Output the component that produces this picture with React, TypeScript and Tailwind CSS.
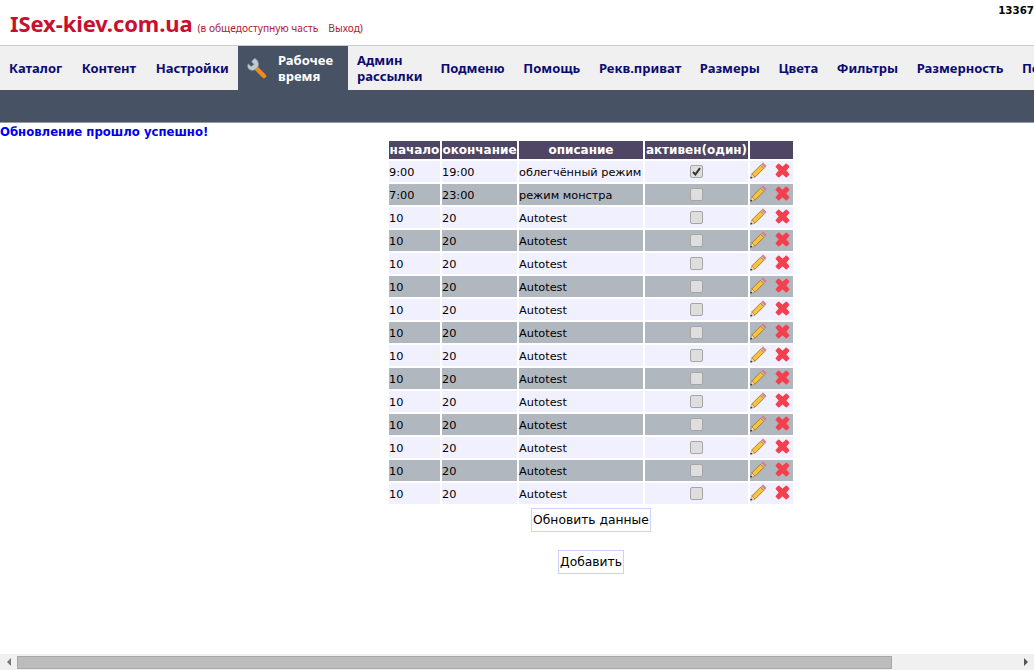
import { useState } from "react";

interface Row {
  start: string;
  end: string;
  title: string;
  active?: boolean;
}

const menu = ["Каталог", "Контент", "Настройки"];
const menuRest = ["Подменю", "Помощь", "Рекв.приват", "Размеры", "Цвета", "Фильтры", "Размерность", "Пользователи"];

const rows: Row[] = [
  { start: "9:00", end: "19:00", title: "облегчённый режим", active: true },
  { start: "7:00", end: "23:00", title: "режим монстра" },
  ...Array.from({ length: 13 }, () => ({ start: "10", end: "20", title: "Autotest" })),
];

function WrenchIcon() {
  return (
    <svg width="22" height="22" viewBox="0 0 22 22">
      <path d="M10 11 L18 19" stroke="#f08c1e" strokeWidth="4.5" strokeLinecap="round" />
      <path
        d="M8.5 1.5 L5.5 4.5 L8 7.5 L5 9.5 L2.2 6.8 C1 9.5 2 12.5 5 13.2 C7 13.7 8.6 13 9.6 12 L11.8 10 C12.8 8.5 12.8 6 11.6 4 C11 2.8 9.8 1.8 8.5 1.5 Z"
        fill="#c3c9d1"
        stroke="#8d96a3"
        strokeWidth="0.6"
      />
    </svg>
  );
}

function PencilIcon() {
  return (
    <svg width="17" height="17" viewBox="0 0 17 17" className="shrink-0">
      <path d="M13 0.8 L16.2 4 L14.8 5.4 L11.6 2.2 Z" fill="#ef7f8a" stroke="#c9606a" strokeWidth="0.5" />
      <path d="M11.6 2.2 L14.8 5.4 L13.8 6.4 L10.6 3.2 Z" fill="#d5d9de" stroke="#8c8c8c" strokeWidth="0.5" />
      <path d="M10.6 3.2 L13.8 6.4 L5 15.2 L1.8 12 Z" fill="#f7c23c" stroke="#9c6f1a" strokeWidth="0.8" />
      <path d="M1.8 12 L5 15.2 L0.6 16.4 Z" fill="#f1dcb0" stroke="#8a6a3a" strokeWidth="0.4" />
      <path d="M0.8 14.6 L2.4 16.1 L0.4 16.6 Z" fill="#111" />
    </svg>
  );
}

function RemoveIcon() {
  return (
    <svg width="15" height="15" viewBox="0 0 15 15" className="shrink-0">
      <path
        d="M3.6 1.6 L7.5 5 L11.4 1.6 L13.4 3.6 L10 7.5 L13.4 11.4 L11.4 13.4 L7.5 10 L3.6 13.4 L1.6 11.4 L5 7.5 L1.6 3.6 Z"
        fill="#f2404f"
        stroke="#f2404f"
        strokeWidth="2"
        strokeLinejoin="round"
      />
    </svg>
  );
}

function Checkbox({ checked }: { checked?: boolean }) {
  return (
    <span className="mx-auto flex h-[13px] w-[13px] items-center justify-center rounded-[2px] border border-[#a6a6a6] bg-[#dedede]">
      {checked && (
        <svg width="9" height="9" viewBox="0 0 9 9">
          <path d="M1 5 L3.4 7.4 L8 1.2" fill="none" stroke="#333" strokeWidth="2" />
        </svg>
      )}
    </span>
  );
}

function Scrollbar() {
  return (
    <div className="flex h-4 shrink-0 items-center bg-[#f0f0f0]">
      <div className="flex w-[17px] justify-center">
        <div className="h-0 w-0 border-y-4 border-r-4 border-y-transparent border-r-[#777]" />
      </div>
      <div className="h-[13px] w-[875px] border border-[#a8a8a8] bg-[#bcbcbc]" />
      <div className="flex-1" />
      <div className="flex w-[17px] justify-center">
        <div className="h-0 w-0 border-y-4 border-l-4 border-y-transparent border-l-[#555]" />
      </div>
    </div>
  );
}

export default function App() {
  const [data] = useState(rows);

  return (
    <div className="flex h-screen flex-col overflow-hidden bg-white font-['DejaVu_Sans',sans-serif] text-[12px] text-black">
      {/* Header */}
      <div className="flex h-[46px] shrink-0 justify-between border-b border-[#cccccc] pl-[10px]">
        <div className="flex items-baseline pt-[8px] font-['Noto_Sans',sans-serif]">
          <span className="text-[22px] leading-[30px] font-bold tracking-[-0.1px] text-[#c8102e]">ISex-kiev.com.ua</span>
          <span className="ml-[5px] text-[10.2px] text-[#b0202f]">(в общедоступную часть</span>
          <span className="ml-[10px] text-[10.2px] text-[#b0202f]">Выход)</span>
        </div>
        <div className="pt-[3px] text-[10.3px] font-bold">13367</div>
      </div>

      {/* Menu */}
      <div className="flex h-[44px] shrink-0 overflow-hidden bg-[#f0f0f0] font-['Noto_Sans',sans-serif] text-[13px] leading-[16px] font-bold whitespace-nowrap text-[#0b0b70]">
        <div className="flex w-[238px] shrink-0 items-center gap-[19.5px] pl-[9px]">
          {menu.map((item) => (
            <span key={item}>{item}</span>
          ))}
        </div>
        <div className="flex w-[110px] shrink-0 items-center bg-[#475264] pl-[8px] text-white">
          <WrenchIcon />
          <span className="ml-[10px]">
            Рабочее
            <br />
            время
          </span>
        </div>
        <div className="ml-[9px] flex items-center">
          Админ
          <br />
          рассылки
        </div>
        <div className="ml-[18px] flex items-center gap-[18.6px]">
          {menuRest.map((item) => (
            <span key={item}>{item}</span>
          ))}
        </div>
      </div>

      <div className="h-[33px] shrink-0 border-b border-[#9a9a9a] bg-[#475264]" />

      {/* Content is wider than the window, the table centres on the full width */}
      <div className="min-h-0 w-[1182px] flex-1">
        <div className="h-[16px] text-[11.7px] leading-[18px] font-bold text-[#0000ee]">Обновление прошло успешно!</div>

        <table className="mx-auto table-fixed border-separate border-spacing-[2px] text-[11.3px] leading-[15px]">
          <thead>
            <tr className="bg-[#4f4564] text-[12px] text-white">
              <th className="h-[18px] w-[51px] p-0 font-bold">начало</th>
              <th className="w-[75px] p-0 font-bold">окончание</th>
              <th className="w-[124px] p-0 font-bold">описание</th>
              <th className="w-[103px] p-0 font-bold">активен(один)</th>
              <th className="w-[43px] p-0" />
            </tr>
          </thead>
          <tbody>
            {data.map((row, i) => (
              <tr key={i} className={i % 2 === 0 ? "bg-[#f0f0ff]" : "bg-[#b1b7bf]"}>
                <td className="h-[21px] p-0 pt-[1px]">{row.start}</td>
                <td className="p-0 pt-[1px]">{row.end}</td>
                <td className="p-0 pt-[1px] whitespace-nowrap">{row.title}</td>
                <td className="p-0">
                  <Checkbox checked={row.active} />
                </td>
                <td className="p-0">
                  <div className="flex items-center justify-between pr-[3px] pb-[2px]">
                    <PencilIcon />
                    <RemoveIcon />
                  </div>
                </td>
              </tr>
            ))}
          </tbody>
        </table>

        <div className="flex flex-col items-center pt-[2px]">
          <button className="h-[24px] border border-[#d0d0ff] bg-white px-[1px] text-[12.3px]">Обновить данные</button>
          <button className="mt-[18px] h-[24px] border border-[#d0d0ff] bg-white px-[1px] text-[12.3px]">Добавить</button>
        </div>
      </div>

      <Scrollbar />
    </div>
  );
}
